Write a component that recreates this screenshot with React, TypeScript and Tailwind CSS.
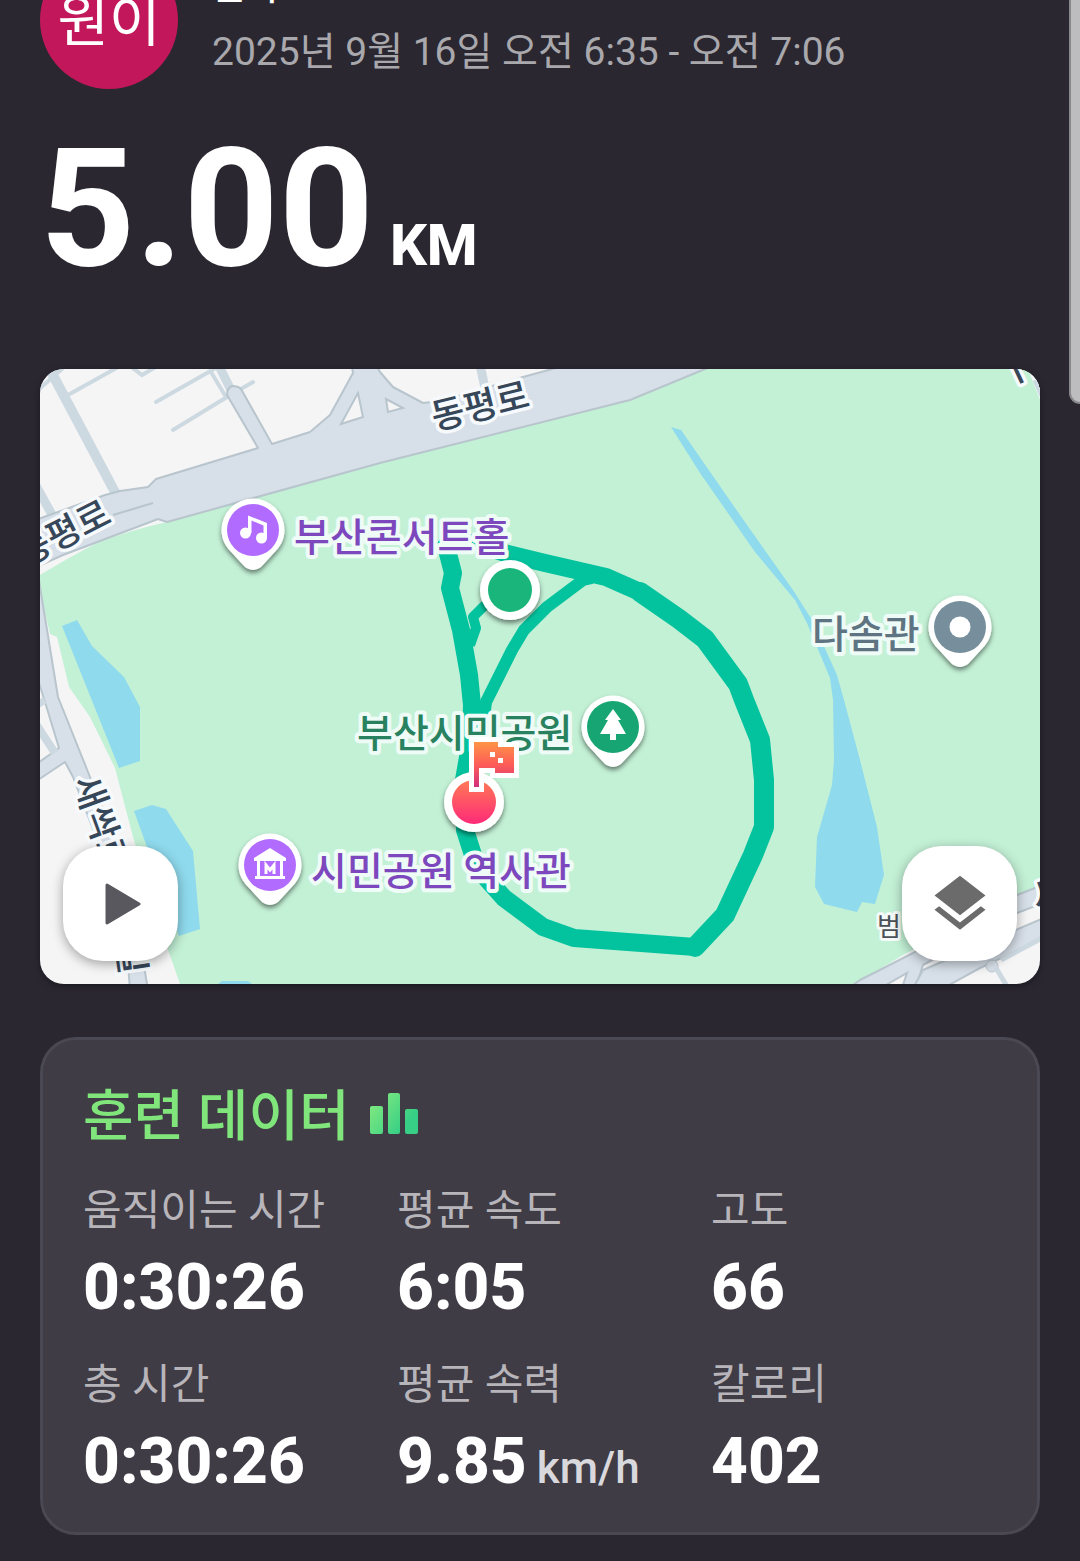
import { MdLayers } from "react-icons/md";
import type { ReactNode } from "react";

type Stat = { label: string; value: string; unit?: string };

const stats: Stat[] = [
  { label: "움직이는 시간", value: "0:30:26" },
  { label: "평균 속도", value: "6:05" },
  { label: "고도", value: "66" },
  { label: "총 시간", value: "0:30:26" },
  { label: "평균 속력", value: "9.85", unit: "km/h" },
  { label: "칼로리", value: "402" },
];

function Pin({ x, y, color, children }: { x: number; y: number; color: string; children: ReactNode }) {
  return (
    <g transform={`translate(${x} ${y})`}>
      <path
        d="M-31.500 0A31.500 31.500 0 0 1 31.500 0C31.500 10 27 17 20 24L8 37Q0 43-8 37L-20 24C-27 17-31.500 10-31.500 0Z"
        fill="#fff"
        filter="url(#pinShadow)"
      />
      <circle r="26" fill={color} />
      {children}
    </g>
  );
}

function Place({ x, y, color, children }: { x: number; y: number; color: string; children: string }) {
  return (
    <text x={x} y={y} fontSize="39" fontWeight="500" fill={color} stroke="#eefbf6" strokeWidth="8" strokeLinejoin="round" paintOrder="stroke">
      {children}
    </text>
  );
}

function Street({ x, y, angle, size = 36, children }: { x: number; y: number; angle: number; size?: number; children: string }) {
  return (
    <text
      transform={`translate(${x} ${y}) rotate(${angle})`}
      y={size * 0.38}
      textAnchor="middle"
      fontSize={size}
      fontWeight="500"
      fill="#36475a"
      stroke="#f7fafc"
      strokeWidth="7"
      strokeLinejoin="round"
      paintOrder="stroke"
    >
      {children}
    </text>
  );
}

function RouteMap() {
  return (
    <svg viewBox="40 369 1000 615" className="block h-auto w-full" role="img" aria-label="달리기 경로 지도">
      <defs>
        <filter id="pinShadow" x="-30%" y="-30%" width="160%" height="160%">
          <feDropShadow dx="0" dy="3" stdDeviation="2.500" floodColor="#000" floodOpacity="0.5" />
        </filter>
        <linearGradient id="finish" gradientUnits="userSpaceOnUse" x1="0" y1="780" x2="0" y2="824">
          <stop stopColor="#ff7a55" />
          <stop offset="1" stopColor="#ff2a78" />
        </linearGradient>
        <linearGradient id="flag" gradientUnits="userSpaceOnUse" x1="0" y1="742" x2="0" y2="787">
          <stop stopColor="#ff9447" />
          <stop offset="0.500" stopColor="#fd5d58" />
          <stop offset="1" stopColor="#d3307c" />
        </linearGradient>
      </defs>

      <rect x="40" y="369" width="1000" height="615" fill="#f6f5f6" />

      {/* park */}
      <path
        d="M40 575Q66 559 97 543Q130 530 167 522L380 463L630 400L705 369H1040V885L903 955L855 984H180L167 947L133 837L115 768L90 717L69 687L57 637L50 634L45 612L40 590Z"
        fill="#c3f1d6"
      />

      {/* water */}
      <g fill="#8fdaed">
        <path d="M62 626L77 620L92 646L124 677L140 707V761L119 768Z" />
        <path d="M134 811L152 805L166 809L193 851L200 929L179 936L147 847Z" />
        <path d="M218 984L222 981H248L252 984Z" />
        <path d="M671 427L681 430L740 515L793 590L812 620L837 675L844 700L860 760L877 827L884 875L875 904L862 902L857 912L824 904L815 887L817 837L832 785L834 760L833 700L830 678L807 623L795 600L755 552L700 473Z" />
      </g>

      {/* alleys */}
      <g fill="none" stroke="#cdd9e1" strokeWidth="4" strokeLinecap="round">
        <path d="M68 395L120 366M130 366L142 375L154 368M156 402L214 369M173 430L227 397L253 382M211 372L226 397" />
        <path d="M38 390L62 369" />
        <path d="M46 362L116 494" strokeWidth="10" />
        <path d="M34 482L56 522" strokeWidth="9" />
        <path d="M480 365L485 388" strokeWidth="9" />
        <path d="M218 364L234 396" strokeWidth="9" />
      </g>

      {/* main roads */}
      <g fill="#d7dfe8" stroke="#b8c5cd" strokeWidth="2" strokeLinejoin="round">
        <path d="M30 522L105 495L120 491L148 487L156 479L258 448L227 395Q227 388 232 386Q238 386 241 389L272 444L310 432L330 415L353 373L351 360H374L380 372L393 387L423 403L440 401L523 377L585 360H730L705 369L630 400L380 463L167 522L158 519L63 555L30 570Z" />
        <path d="M39 580L41 593L58 697L90 777L128 870L147 984V990H130L124 910L73 777L65 762L38 780V763L59 748L45 702L38 680Z" />
        <path d="M860 980L868 976L913 953L1017 895L1035 888L1046 884V902L1017 913L923 965L915 990H846Z" />
        <path d="M912 990L923 970L1046 917V937L980 968L940 990Z" />
      </g>
      <path d="M113 515L153 503" stroke="#b8c5cd" strokeWidth="2" />
      <g fill="#f6f5f6" stroke="#b8c5cd" strokeWidth="2">
        <path d="M358 393L363 417L341 424Z" />
        <path d="M386 399L403 408L388 412Z" />
        <path d="M886 985L907 973L903 985Z" />
      </g>
      <path d="M36 724L55 753" stroke="#cdd9e1" strokeWidth="8" />
      <path d="M36 706L45 700" stroke="#cdd9e1" strokeWidth="7" />
      <circle cx="992" cy="966" r="6" fill="#d7dfe8" stroke="#b8c5cd" />
      <path d="M996 968L1008 988M1001 960L1044 937" stroke="#cdd9e1" strokeWidth="5" />
      <path d="M1026 364L1044 410V364Z" fill="#f4f6f8" />
      <path d="M1035 380L1044 400" stroke="#cdd9e1" strokeWidth="5" />

      {/* run track */}
      <g fill="none" stroke="#02c39e" strokeLinejoin="round">
        <path
          d="M446 546L475 543L508 554L545 563L606 577L640 592L679 619L705 639L738 684L744 700L760 740L764 780V827L753 855L725 915L695 947L574 938L543 927L504 898L487 879L473 855L465 830L464 780L471 740L472 705L469 675L461 630L450 588L453 573L446 546Z"
          strokeWidth="18"
        />
        <path d="M592 578L583 580L547 607L524 630L512 650L486 702L480 750" strokeWidth="12" />
        <path d="M510 590L484 606L473 617L476 628L470 645" strokeWidth="10" />
        <path d="M640 592L679 619L705 639L738 684L744 700L760 740L764 780V827L753 855L725 915L695 947" strokeWidth="20" strokeLinecap="round" />
      </g>

      <Street x={480} y={405} angle={-14}>동평로</Street>
      <Street x={63} y={532} angle={-27}>동평로</Street>
      <Street x={102} y={823} angle={70}>새싹로</Street>
      <Street x={132} y={957} angle={82}>길</Street>
      <Street x={1048} y={893} angle={-20}>시</Street>
      <Street x={1015} y={368} angle={-25}>ㅣ</Street>
      <text x="877" y="936" fontSize="26" fontWeight="400" fill="#4b5156" stroke="#f3faf7" strokeWidth="6" strokeLinejoin="round" paintOrder="stroke">
        범
      </text>
      <Place x={294} y={551} color="#7d47bd">부산콘서트홀</Place>
      <Place x={311} y={885} color="#7d47bd">시민공원 역사관</Place>
      <Place x={357} y={747} color="#28825f">부산시민공원</Place>
      <Place x={812} y={648} color="#5f7482">다솜관</Place>

      <Pin x={253} y={530} color="#b26bff">
        <path d="M-5-14.500L14-7V8H10.500V-4.500L-1.500-9.500V3H-5Z" fill="#fff" />
        <circle cx="-7.500" cy="3" r="5.500" fill="#fff" />
        <circle cx="8.500" cy="8" r="5.500" fill="#fff" />
      </Pin>
      <Pin x={270} y={865} color="#b26bff">
        <path d="M0-17L16-7V-4H13V11H15V14H-15V11H-13V-4H-16V-7Z" fill="#fff" />
        <rect x="-10" y="-4" width="20" height="15" fill="#b26bff" />
        <path d="M-4 9V0L0 5L4 0V9" fill="none" stroke="#fff" strokeWidth="3" />
      </Pin>
      <Pin x={613} y={727} color="#17a673">
        <path d="M0-18L8-7H5L13 7H3V13H-3V7H-13L-5-7H-8Z" fill="#fff" />
      </Pin>
      <Pin x={960} y={627} color="#778f9c">
        <circle r="10.500" fill="#fff" />
      </Pin>

      <circle cx="510" cy="590" r="30" fill="#fff" filter="url(#pinShadow)" />
      <circle cx="510" cy="590" r="22" fill="#19b57b" />
      <circle cx="474" cy="802" r="30" fill="#fff" filter="url(#pinShadow)" />
      <circle cx="474" cy="802" r="22" fill="url(#finish)" />
      <path
        d="M474 742H498V747H514V773H495V768H479V787H474Z"
        fill="url(#flag)"
        stroke="#fff"
        strokeWidth="10"
        paintOrder="stroke"
      />
      <path d="M490 752h5v5h-5zM498 758h5v5h-5z" fill="#fff" />
    </svg>
  );
}

function BarsIcon() {
  return (
    <svg viewBox="0 0 48 42" className="mb-1 h-[42px] w-12" aria-hidden="true">
      <defs>
        <linearGradient id="bars" gradientUnits="userSpaceOnUse" x1="4" y1="8" x2="36" y2="32">
          <stop stopColor="#7ee880" />
          <stop offset="1" stopColor="#36cf85" />
        </linearGradient>
      </defs>
      <g fill="url(#bars)">
        <rect x="0" y="13" width="13" height="28" rx="2" />
        <rect x="18" y="0" width="12" height="41" rx="2" />
        <rect x="35" y="16" width="13" height="25" rx="2" />
      </g>
    </svg>
  );
}

export default function App() {
  return (
    <div className="relative min-h-screen overflow-hidden bg-[#2a2731] px-10 pb-7 font-['Roboto','Noto_Sans_CJK_KR',sans-serif] text-white">
      <div className="absolute -top-4 right-0 h-[420px] w-[11px] rounded-bl-xl border-b-2 border-l-2 border-[#89888b] bg-[#bdbcbf]" />

      <header className="-mt-[49px] flex h-[138px] items-center gap-[34px]">
        <div className="flex size-[138px] shrink-0 items-center justify-center rounded-full bg-[#c2185b] pt-1 text-[56px] leading-none">
          원이
        </div>
        <div className="flex flex-col gap-2">
          <p className="text-[36px] leading-[56px] font-medium">원이</p>
          <p className="text-[39px] leading-[56px] text-[#a9a8ac]">2025년 9월 16일 오전 6:35 - 오전 7:06</p>
        </div>
      </header>

      <h1 className="mt-9 flex items-baseline gap-4 font-extrabold">
        <span className="text-[166px] leading-[168px] font-bold">5.00</span>
        <span className="text-[58px] leading-none">KM</span>
      </h1>

      <section className="relative mt-[76px] overflow-hidden rounded-3xl font-['Noto_Sans_CJK_KR',sans-serif] shadow-[0_2px_6px_rgba(0,0,0,0.4)]">
        <RouteMap />
        <button
          type="button"
          aria-label="재생"
          className="absolute bottom-[23px] left-[23px] flex size-[115px] items-center justify-center rounded-[40px] bg-white shadow-[0_3px_12px_rgba(0,0,0,0.35)]"
        >
          <svg viewBox="0 0 36 42" className="ml-1 h-[42px] w-9" aria-hidden="true">
            <path d="M2 2L34 21L2 40Z" fill="#5a585f" stroke="#5a585f" strokeWidth="3" strokeLinejoin="round" />
          </svg>
        </button>
        <button
          type="button"
          aria-label="지도 레이어"
          className="absolute right-[23px] bottom-[23px] flex size-[115px] items-center justify-center rounded-[40px] bg-white text-[#6b6b6b] shadow-[0_3px_12px_rgba(0,0,0,0.35)]"
        >
          <MdLayers className="size-[68px]" />
        </button>
      </section>

      <section className="mt-[53px] rounded-[36px] border-[3px] border-[#4a4852] bg-[#3f3c46] pt-10 pr-3 pb-7 pl-10">
        <h2 className="flex items-center gap-5 text-[55px] leading-[72px] font-medium text-[#80e67c]">
          훈련 데이터
          <BarsIcon />
        </h2>
        <dl className="mt-[26px] grid grid-cols-3 gap-y-7">
          {stats.map((s) => (
            <div key={s.label} className="flex flex-col gap-2">
              <dt className="text-[42px] leading-[66px] text-[#b7b5ba]">{s.label}</dt>
              <dd className="text-[64px] leading-[72px] font-extrabold whitespace-nowrap">
                {s.value}
                {s.unit && <span className="ml-[10px] text-[44px] font-medium text-[#d9d8dc]">{s.unit}</span>}
              </dd>
            </div>
          ))}
        </dl>
      </section>
    </div>
  );
}
